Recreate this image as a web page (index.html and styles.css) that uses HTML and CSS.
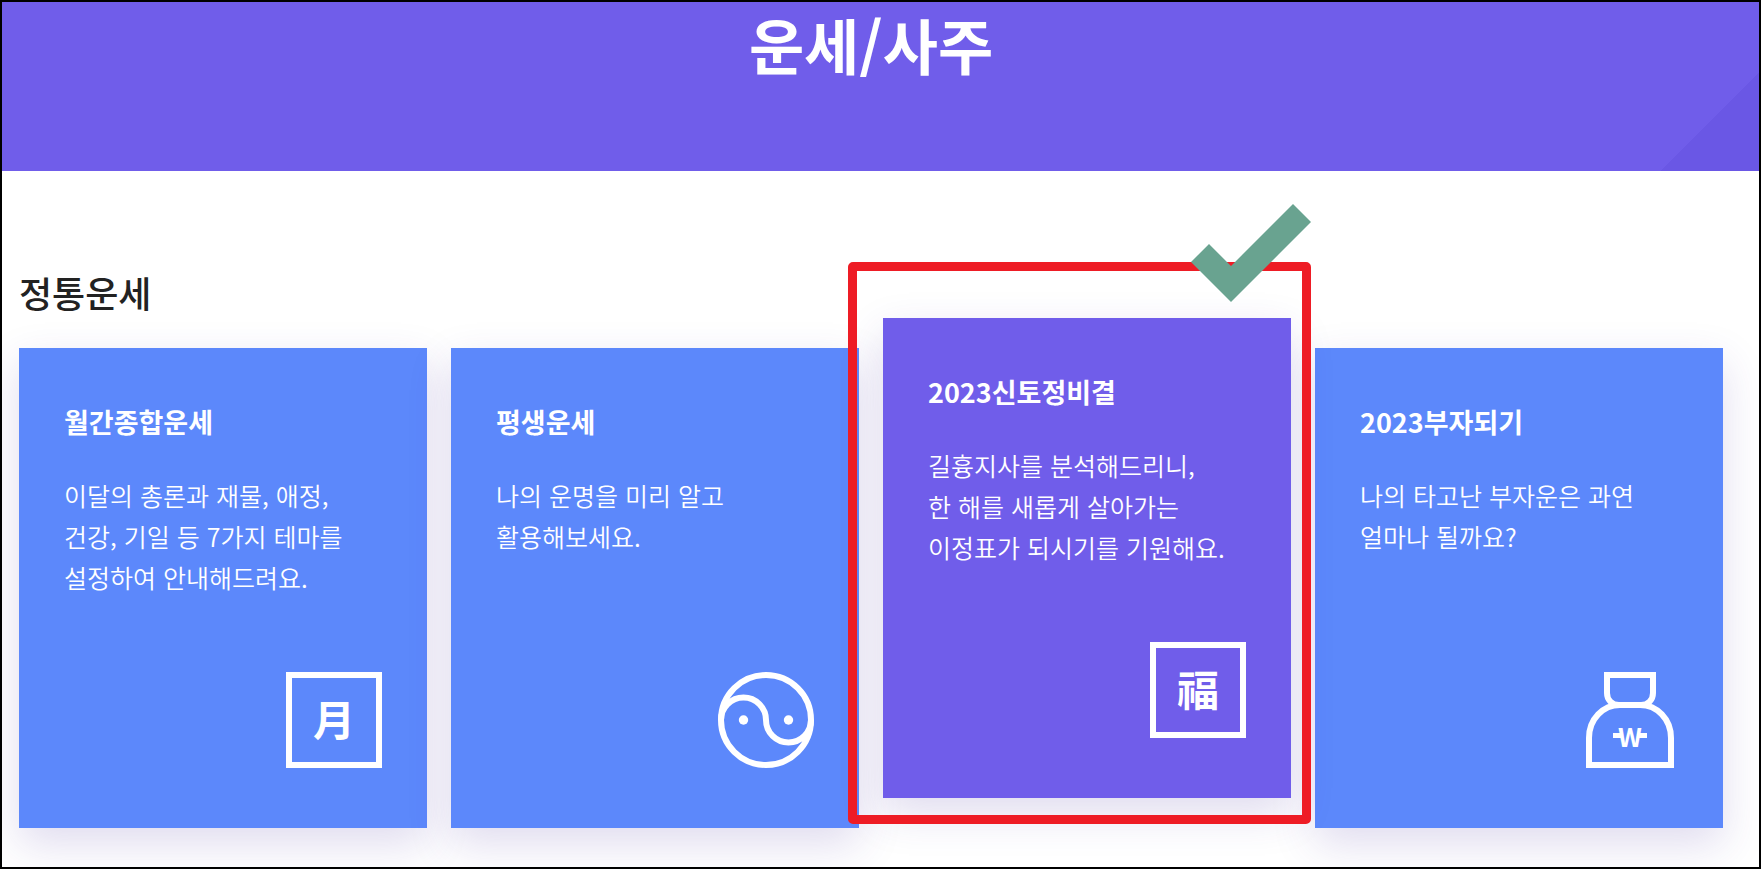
FILE: index.html
```html
<!DOCTYPE html>
<html lang="ko">
  <head>
    <meta charset="UTF-8" />
    <meta name="viewport" content="width=device-width, initial-scale=1.0" />
    <title>운세/사주</title>
    <link rel="stylesheet" href="styles.css">
  </head>
  <body>
    <header class="hero">
      <h1>운세/사주</h1>
    </header>

    <main class="content">
      <h2>정통운세</h2>
      <div class="cards">
        <a class="card" href="#">
          <h3>월간종합운세</h3>
          <p>이달의 총론과 재물, 애정,<br>건강, 기일 등 7가지 테마를<br>설정하여 안내해드려요.</p>
          <span class="icon hanja">月</span>
        </a>

        <a class="card" href="#">
          <h3>평생운세</h3>
          <p>나의 운명을 미리 알고<br>활용해보세요.</p>
          <svg class="icon" viewBox="0 0 96 96">
            <circle cx="48" cy="48" r="45" />
            <path d="M3 48a22.5 22.5 0 0 1 45 0a22.5 22.5 0 0 0 45 0" />
            <circle class="dot" cx="25.5" cy="48" r="4.7" />
            <circle class="dot" cx="70.5" cy="48" r="4.7" />
          </svg>
        </a>

        <a class="card active" href="#">
          <h3>2023신토정비결</h3>
          <p>길흉지사를 분석해드리니,<br>한 해를 새롭게 살아가는<br>이정표가 되시기를 기원해요.</p>
          <span class="icon hanja">福</span>
          <!-- highlight frame with check mark -->
          <span class="marker">
            <svg class="check" viewBox="0 0 120 98">
              <path d="M0 58L18 40L40 62L102 0L120 18L40 98z" />
            </svg>
          </span>
        </a>

        <a class="card" href="#">
          <h3>2023부자되기</h3>
          <p>나의 타고난 부자운은 과연<br>얼마나 될까요?</p>
          <svg class="icon" viewBox="0 0 96 96">
            <path d="M25 3H71V21C71 28 66 33 59 33H37C30 33 25 28 25 21z" />
            <path d="M7 93V66C7 47 21 33 38 33H58C75 33 89 47 89 66V93z" />
            <path class="bar" d="M31 63.500H40M56 63.500H65" />
            <text x="48" y="75">W</text>
          </svg>
        </a>
      </div>
    </main>
  </body>
</html>
```
FILE: styles.css
```css
* {
  box-sizing: border-box;
}
body {
  min-height: 100vh;
  margin: 0;
  border: 2px solid #000;
  overflow: hidden;
  background: #fff;
  color: #222;
  font-family: "Noto Sans CJK KR", "Noto Sans", sans-serif;
}
h1,
h2,
h3,
p {
  margin: 0;
}
.hero {
  height: 169px;
  padding: 0 36px 0 17px;
  background: linear-gradient(135deg, transparent 50%, #6a57e5 50%) right bottom / 98px 98px no-repeat #705dea;
  color: #fff;
  text-align: center;
}
.hero h1 {
  font-size: 60px;
  font-weight: 700;
  line-height: 84px;
}
.content {
  padding: 94px 36px 39px 17px;
}
.content h2 {
  margin-bottom: 29px;
  font-size: 36px;
  font-weight: 500;
  line-height: 54px;
}
.cards {
  display: grid;
  grid-template-columns: repeat(4, 1fr);
  align-items: start;
  gap: 24px;
}
.card {
  position: relative;
  display: flex;
  flex-direction: column;
  min-height: 480px;
  padding: 54px 45px 60px;
  background: #5c88fb;
  box-shadow: 0 16px 40px rgba(74, 50, 160, 0.17);
  color: #fff;
  text-decoration: none;
}
.card h3 {
  margin-bottom: 33px;
  font-size: 27px;
  font-weight: 700;
  line-height: 40px;
}
.card p {
  font-size: 25px;
  font-weight: 350;
  line-height: 41px;
}
.icon {
  width: 96px;
  height: 96px;
  margin-top: auto;
  margin-left: auto;
  fill: none;
  stroke: #fff;
  stroke-width: 6;
}
.icon .dot,
.icon text {
  fill: #fff;
  stroke: none;
}
.icon .bar {
  stroke-width: 5;
}
.icon text {
  font-size: 26px;
  font-weight: 700;
  text-anchor: middle;
}
.hanja {
  border: 6px solid #fff;
  font-size: 42px;
  font-weight: 700;
  line-height: 80px;
  text-align: center;
}
.active {
  z-index: 1;
  margin-top: -30px;
  margin-bottom: 30px;
  background: #705dea;
}
.marker {
  position: absolute;
  top: -56px;
  right: -20px;
  bottom: -26px;
  left: -35px;
  border: 9px solid #ee1c25;
  border-radius: 5px;
}
.check {
  position: absolute;
  top: -67px;
  right: -9px;
  width: 120px;
  height: 98px;
  fill: #69a390;
}
```
